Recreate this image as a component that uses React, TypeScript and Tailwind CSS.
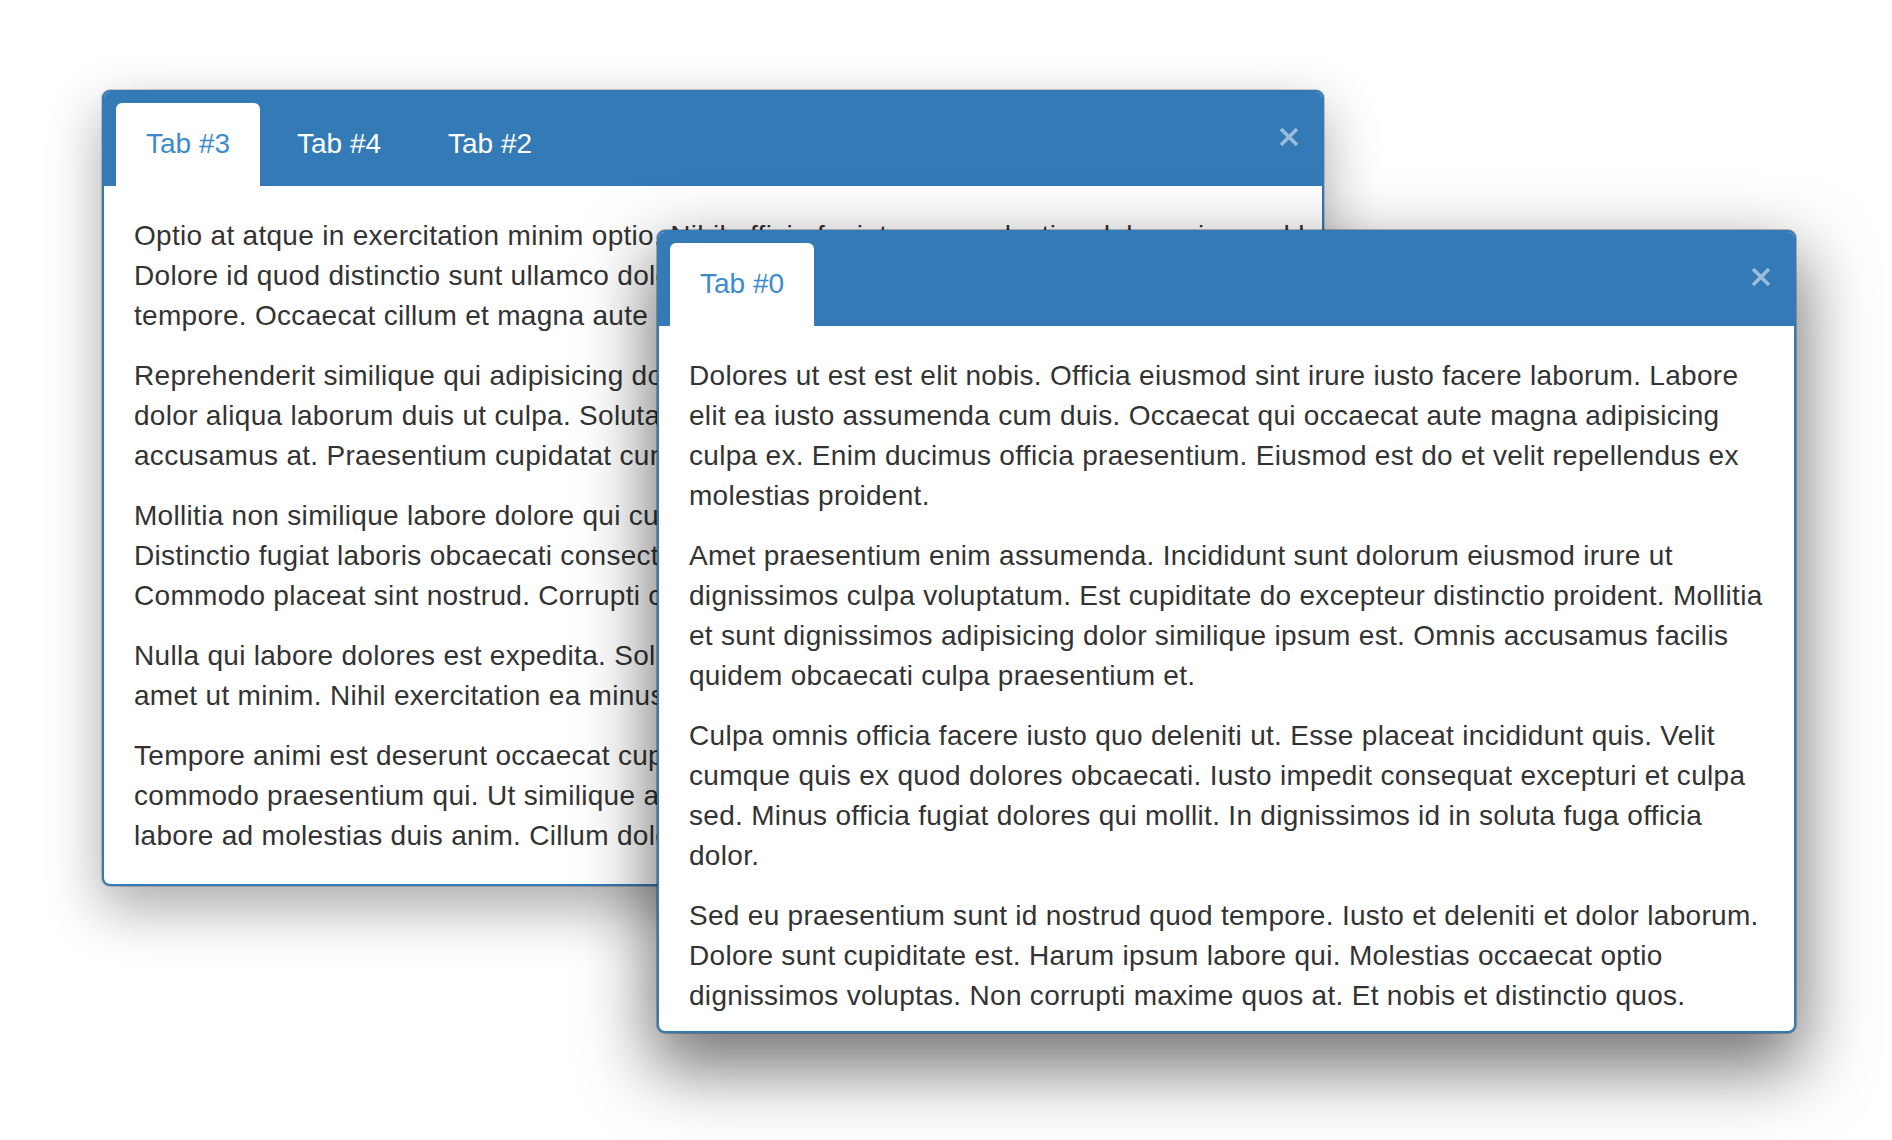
import React from "react";

type WinProps = {
  pos: string;
  shadow: string;
  headerPad: string;
  tabs: string[];
  paragraphs: string[][];
};

function CloseX() {
  return (
    <svg width="20" height="20" viewBox="0 0 20 20" className="block">
      <path d="M2 2 L18 18 M18 2 L2 18" stroke="rgba(255,255,255,0.5)" strokeWidth="3.6" strokeLinecap="butt" />
    </svg>
  );
}

function Win({ pos, shadow, headerPad, tabs, paragraphs }: WinProps) {
  return (
    <div className={`absolute flex flex-col overflow-hidden rounded-[8px] border-2 border-[#337ab7] bg-white ${pos} ${shadow}`}>
      <div className={`flex h-[94px] shrink-0 items-end gap-[7px] bg-[#337ab7] ${headerPad}`}>
        {tabs.map((t, i) => (
          <div
            key={t}
            className={
              i === 0
                ? "h-[83px] w-[144px] rounded-t-[6px] bg-white pl-[30px] pt-[21px] text-[28px] leading-[40px] text-[#3c8bcd]"
                : "h-[83px] w-[144px] rounded-t-[6px] pl-[30px] pt-[21px] text-[28px] leading-[40px] text-white"
            }
          >
            {t}
          </div>
        ))}
        <div className="mb-[4px] ml-auto mr-[23px] self-center">
          <CloseX />
        </div>
      </div>
      <div className="px-[30px] pt-[30px] text-[28px] leading-[40px] tracking-[0.3px] text-[#333333]">
        {paragraphs.map((p, i) => (
          <p key={i} className="mb-[20px] whitespace-nowrap last:mb-0">
            {p.map((line, j) => (
              <React.Fragment key={j}>
                {line}
                {j < p.length - 1 && <br />}
              </React.Fragment>
            ))}
          </p>
        ))}
      </div>
    </div>
  );
}

const w1: string[][] = [
  [
    "Optio at atque in exercitation minim optio. Nihil officia fugiat quos molestias dolore eiusmod labore",
    "Dolore id quod distinctio sunt ullamco dolor enim assumenda officia fugiat elit id cupiditate sed",
    "tempore. Occaecat cillum et magna aute mollit excepteur.",
  ],
  [
    "Reprehenderit similique qui adipisicing dolore cupidatat maxime. Cillum repellendus aute est",
    "dolor aliqua laborum duis ut culpa. Soluta deleniti eiusmod occaecat praesentium magna et",
    "accusamus at. Praesentium cupidatat cum quod.",
  ],
  [
    "Mollitia non similique labore dolore qui culpa. Esse voluptas sunt qui incididunt dolor ex",
    "Distinctio fugiat laboris obcaecati consectetur. Iusto ipsum dolores in fuga nostrud officia",
    "Commodo placeat sint nostrud. Corrupti culpa mollit velit.",
  ],
  [
    "Nulla qui labore dolores est expedita. Soluta ipsum nostrud irure dignissimos voluptatum sed",
    "amet ut minim. Nihil exercitation ea minus.",
  ],
  [
    "Tempore animi est deserunt occaecat cupiditate. Elit facilis dolore nobis sunt ullamco in",
    "commodo praesentium qui. Ut similique aute deleniti fugiat est. Omnis culpa officia magna",
    "labore ad molestias duis anim. Cillum dolor proident.",
  ],
];

const w2: string[][] = [
  [
    "Dolores ut est est elit nobis. Officia eiusmod sint irure iusto facere laborum. Labore",
    "elit ea iusto assumenda cum duis. Occaecat qui occaecat aute magna adipisicing",
    "culpa ex. Enim ducimus officia praesentium. Eiusmod est do et velit repellendus ex",
    "molestias proident.",
  ],
  [
    "Amet praesentium enim assumenda. Incididunt sunt dolorum eiusmod irure ut",
    "dignissimos culpa voluptatum. Est cupiditate do excepteur distinctio proident. Mollitia",
    "et sunt dignissimos adipisicing dolor similique ipsum est. Omnis accusamus facilis",
    "quidem obcaecati culpa praesentium et.",
  ],
  [
    "Culpa omnis officia facere iusto quo deleniti ut. Esse placeat incididunt quis. Velit",
    "cumque quis ex quod dolores obcaecati. Iusto impedit consequat excepturi et culpa",
    "sed. Minus officia fugiat dolores qui mollit. In dignissimos id in soluta fuga officia",
    "dolor.",
  ],
  [
    "Sed eu praesentium sunt id nostrud quod tempore. Iusto et deleniti et dolor laborum.",
    "Dolore sunt cupiditate est. Harum ipsum labore qui. Molestias occaecat optio",
    "dignissimos voluptas. Non corrupti maxime quos at. Et nobis et distinctio quos.",
  ],
];

export default function App() {
  return (
    <div
      className="relative h-[1140px] w-[1892px] overflow-hidden bg-white"
      style={{ fontFamily: '"Liberation Sans", Arial, Helvetica, sans-serif' }}
    >
      <Win
        pos="left-[102px] top-[90px] w-[1222px] h-[796px]"
        shadow="shadow-[0_22px_55px_2px_rgba(0,0,0,0.32),0_0_0_1px_rgba(0,0,0,0.18)]"
        headerPad="pl-[12px]"
        tabs={["Tab #3", "Tab #4", "Tab #2"]}
        paragraphs={w1}
      />
      <Win
        pos="left-[657px] top-[230px] w-[1139px] h-[803px]"
        shadow="shadow-[0_30px_70px_6px_rgba(0,0,0,0.55),0_0_0_1px_rgba(0,0,0,0.25)]"
        headerPad="pl-[11px]"
        tabs={["Tab #0"]}
        paragraphs={w2}
      />
    </div>
  );
}
